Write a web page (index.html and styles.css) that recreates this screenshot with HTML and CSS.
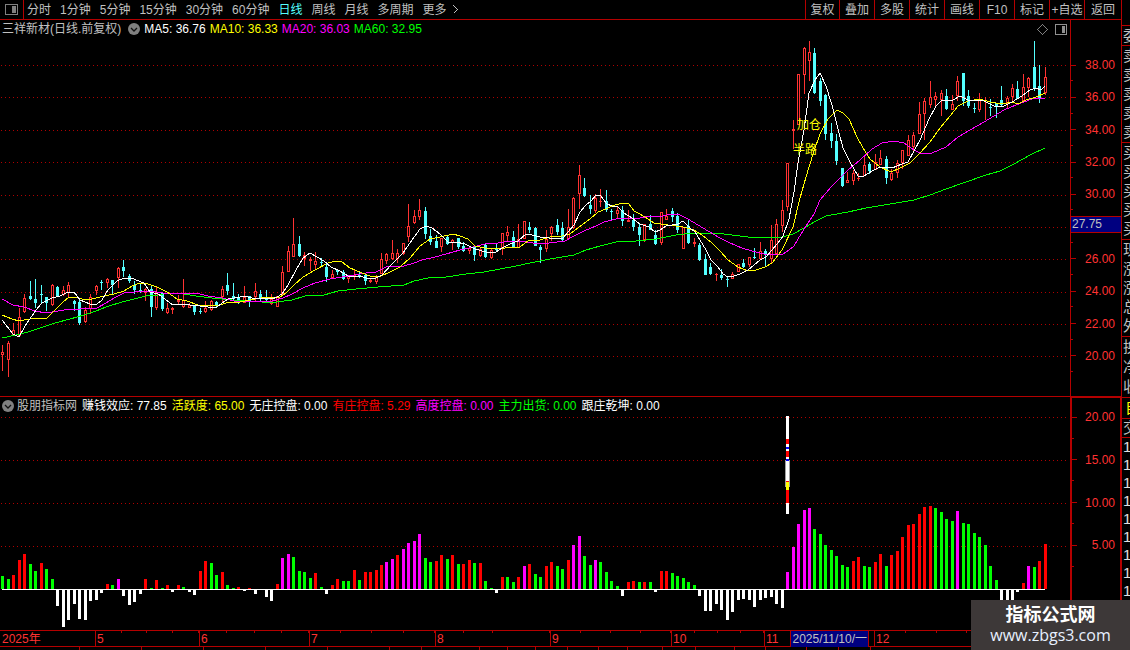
FILE: index.html
```
<!DOCTYPE html>
<html lang="zh-CN">
<head>
    <meta charset="UTF-8">
    <meta name="viewport" content="width=device-width, initial-scale=1.0">
    <title>三祥新材</title>
    <link rel="stylesheet" href="styles.css">
</head>
<body>
    <div class="app">
        <main class="main">
            <header class="toolbar">
                <button class="layout-btn" aria-label="布局">
                    <svg width="13" height="11" viewBox="0 0 13 11"><rect x="0.5" y="0.5" width="12" height="10" rx="1" fill="none" stroke="#808080"/><rect x="7" y="2" width="4" height="7" fill="#808080"/></svg>
                </button>
                <nav class="periods">
                    <button>分时</button>
                    <button>1分钟</button>
                    <button>5分钟</button>
                    <button>15分钟</button>
                    <button>30分钟</button>
                    <button>60分钟</button>
                    <button class="active">日线</button>
                    <button>周线</button>
                    <button>月线</button>
                    <button>多周期</button>
                    <button class="more">更多
                        <svg width="5" height="9" viewBox="0 0 5 9"><path d="M0.5 0.5L4.5 4.5L0.5 8.5" fill="none" stroke="#c0c0c0"/></svg>
                    </button>
                </nav>
                <div class="tools">
                    <button>复权</button>
                    <button>叠加</button>
                    <button>多股</button>
                    <button>统计</button>
                    <button>画线</button>
                    <button>F10</button>
                    <button>标记</button>
                    <button>+自选</button>
                    <button>返回</button>
                </div>
            </header>

            <section class="panel price-panel">
                <div class="plot">
                    <div class="legend">
                        <span class="name">三祥新材(日线.前复权)</span>
                        <button class="drop" aria-label="指标菜单"><svg width="12" height="12" viewBox="0 0 12 12"><circle cx="6" cy="6" r="6" fill="#808080"/><path d="M3 5L6 8L9 5" fill="none" stroke="#111" stroke-width="1.3"/></svg></button>
                        <span class="white">MA5: 36.76</span>
                        <span class="yellow">MA10: 36.33</span>
                        <span class="magenta">MA20: 36.03</span>
                        <span class="green">MA60: 32.95</span>
                        <span class="corner">
                            <svg width="11" height="11" viewBox="0 0 11 11"><path d="M5.5 0.5L10.5 5.5L5.5 10.5L0.5 5.5Z" fill="none" stroke="#808080"/></svg>
                            <svg width="12" height="11" viewBox="0 0 12 11"><rect x="0.5" y="0.5" width="11" height="10" rx="1" fill="none" stroke="#909090"/><rect x="7" y="2" width="3" height="7" fill="#909090"/></svg>
                        </span>
                    </div>
                    <svg class="chart" id="priceChart" viewBox="0 38 1070 358" preserveAspectRatio="none"></svg>
                </div>
                <div class="axis">
                    <ul class="ticks price-ticks">
                        <li>38.00</li>
                        <li>36.00</li>
                        <li>34.00</li>
                        <li>32.00</li>
                        <li>30.00</li>
                        <li></li>
                        <li>26.00</li>
                        <li>24.00</li>
                        <li>22.00</li>
                        <li>20.00</li>
                    </ul>
                    <span class="price-tag">27.75</span>
                </div>
            </section>

            <section class="panel volume-panel">
                <div class="plot">
                    <div class="legend">
                        <button class="drop" aria-label="指标菜单"><svg width="12" height="12" viewBox="0 0 12 12"><circle cx="6" cy="6" r="6" fill="#808080"/><path d="M3 5L6 8L9 5" fill="none" stroke="#111" stroke-width="1.3"/></svg></button>
                        <span class="name">股朋指标网</span>
                        <span class="white">赚钱效应: 77.85</span>
                        <span class="yellow">活跃度: 65.00</span>
                        <span class="white">无庄控盘: 0.00</span>
                        <span class="red">有庄控盘: 5.29</span>
                        <span class="magenta">高度控盘: 0.00</span>
                        <span class="green">主力出货: 0.00</span>
                        <span class="white">跟庄乾坤: 0.00</span>
                    </div>
                    <svg class="chart" id="barChart" viewBox="0 414 1070 216" preserveAspectRatio="none"></svg>
                </div>
                <div class="axis">
                    <ul class="ticks bar-ticks">
                        <li>20.00</li>
                        <li>15.00</li>
                        <li>10.00</li>
                        <li>5.00</li>
                    </ul>
                </div>
            </section>

            <footer class="timeline">
                <div class="months">
                    <span class="plain">2025年</span>
                    <span>5</span>
                    <span>6</span>
                    <span>7</span>
                    <span>8</span>
                    <span>9</span>
                    <span>10</span>
                    <span class="plain nov">11 <b class="date-tag">2025/11/10/一</b></span>
                    <span>12</span>
                    <span class="plain"></span>
                </div>
                <div class="tabs" id="tabs"></div>
            </footer>
        </main>

        <aside class="quote">
            <div class="gap"></div>
            <div class="group head"><span>委</span></div>
            <div class="group five"><span>卖</span><span>卖</span><span>卖</span><span>卖</span><span>卖</span></div>
            <div class="group five"><span>买</span><span>买</span><span>买</span><span>买</span><span>买</span></div>
            <div class="group five"><span>现</span><span>涨</span><span>涨</span><span>总</span><span>外</span></div>
            <div class="group three"><span>换</span><span>净</span><span>收</span></div>
            <div class="group head own"><span>自</span></div>
            <div class="group head"><span>交</span></div>
            <div class="group times"><span>1</span><span>1</span><span>1</span><span>1</span><span>1</span><span>1</span><span>1</span><span>1</span><span>1</span></div>
        </aside>
    </div>

    <div class="watermark">
        <strong>指标公式网</strong>
        <span>www.zbgs3.com</span>
    </div>

    <script>
        const NS = 'http://www.w3.org/2000/svg';
        const STEP = 5.487;

        // direction, high, body top, body bottom, low
        const candles = [
            ['r',345,352,355,371],['r',341,343,360,377],['r',323,330,335,336],['r',308,317,336,337],['r',294,298,312,313],
            ['c',281,296,299,300],['c',279,299,303,308],['c',285,294,295,303],['c',297,297,303,311],['r',284,285,305,306],
            ['c',286,287,296,297],['r',286,290,295,296],['r',282,285,293,298],['c',300,301,304,311],['c',300,302,323,325],
            ['r',307,310,322,323],['r',294,297,309,314],['r',285,286,291,295],['c',280,282,283,290],['r',278,279,283,288],
            ['c',280,280,285,294],['r',267,268,278,288],['c',260,267,271,277],['c',274,276,281,283],['c',281,285,290,294],
            ['c',283,290,292,293],['r',288,289,293,301],['c',285,289,307,317],['r',287,292,308,310],['c',292,293,309,311],
            ['r',303,308,313,314],['r',307,308,310,314],['r',295,300,302,304],['r',279,300,307,308],['r',303,305,308,308],
            ['c',305,306,312,315],['c',308,311,312,314],['r',301,308,312,313],['r',300,301,310,311],['c',301,302,306,307],
            ['r',286,289,297,302],['c',273,285,291,295],['c',283,296,299,301],['c',294,297,300,304],['r',286,297,303,303],
            ['c',296,296,302,307],['r',283,291,297,301],['c',290,294,298,302],['c',290,297,300,302],['r',294,299,304,305],
            ['r',296,296,307,307],['r',266,272,295,296],['r',246,251,272,272],['r',218,244,257,257],['c',236,244,256,257],
            ['r',252,255,259,266],['r',257,259,261,271],['r',252,261,265,269],['c',258,262,263,267],['c',263,267,277,282],
            ['r',270,274,278,278],['c',269,270,272,275],['c',270,272,279,280],['r',276,276,279,283],['r',270,275,277,280],
            ['c',271,275,277,278],['c',274,275,281,285],['r',278,280,282,283],['r',275,276,282,284],['r',253,259,274,274],
            ['r',253,254,261,264],['r',240,253,259,260],['r',249,253,259,263],['r',243,243,254,255],['r',204,226,237,242],
            ['r',210,216,223,224],['r',199,210,217,220],['c',207,211,234,239],['c',229,236,242,245],['c',235,241,248,248],
            ['r',238,238,247,252],['c',236,237,244,245],['r',239,240,243,250],['c',238,238,247,249],['c',242,246,251,252],
            ['r',246,248,251,254],['c',246,247,255,261],['r',248,249,256,257],['c',244,245,257,258],['r',249,250,258,259],
            ['c',244,249,250,252],['r',233,233,248,255],['r',226,232,236,241],['c',231,237,247,247],['r',224,239,248,248],
            ['r',221,221,239,239],['c',222,227,230,233],['c',227,228,246,246],['c',245,247,250,263],['r',230,239,249,252],
            ['r',226,227,234,241],['c',219,225,232,235],['c',222,228,240,242],['r',209,227,239,239],['r',197,198,228,229],
            ['r',165,175,194,209],['c',178,188,196,197],['c',195,205,209,214],['r',194,198,211,213],['r',189,201,202,207],
            ['c',190,201,210,212],['c',209,211,212,221],['r',206,210,214,218],['c',206,210,221,226],['r',210,220,222,222],
            ['c',214,220,227,231],['c',223,227,235,246],['r',224,224,240,242],['c',215,224,230,230],['c',230,235,244,245],
            ['r',212,212,243,245],['r',209,216,220,220],['c',208,211,217,222],['c',213,216,230,233],['r',227,227,249,249],
            ['c',220,226,243,244],['r',238,242,244,247],['c',243,245,260,261],['c',254,259,275,275],['c',263,267,274,275],
            ['r',273,274,275,281],['c',269,275,278,280],['c',276,279,280,287],['r',272,274,279,279],['r',264,264,272,272],
            ['c',259,263,267,268],['r',257,257,265,267],['c',248,257,258,259],['r',242,251,259,259],['c',249,251,255,266],
            ['r',225,240,259,263],['r',219,224,254,254],['r',200,210,226,232],['r',163,163,207,211],['r',120,129,131,149],
            ['r',74,74,125,125],['r',47,48,75,94],['r',41,52,61,81],['c',48,53,93,94],['c',78,81,101,106],
            ['c',94,95,134,140],['c',123,133,141,148],['c',134,141,161,165],['c',168,168,186,187],['r',172,180,183,183],
            ['r',170,173,181,185],['r',173,178,179,181],['r',156,165,176,176],['c',162,164,171,174],['r',154,162,170,170],
            ['r',150,158,165,165],['c',156,159,178,184],['r',169,173,180,181],['r',160,163,173,178],['r',150,150,163,169],
            ['r',135,140,156,156],['r',132,135,147,153],['r',102,114,134,134],['r',98,101,114,140],['r',81,97,105,108],
            ['r',92,96,100,108],['r',90,93,100,116],['c',89,96,109,110],['r',95,104,110,110],['r',76,81,96,101],
            ['c',73,73,101,106],['c',90,96,106,108],['c',103,108,109,113],['r',93,100,110,112],['r',97,100,101,120],
            ['c',99,107,108,116],['c',103,103,107,118],['c',86,100,105,107],['r',96,98,104,108],['r',84,88,97,101],
            ['c',81,89,99,99],['r',74,87,101,102],['r',77,78,88,97],['c',41,67,89,91],['c',65,86,99,103],['r',67,77,93,95]
        ];

        const averages = {
            green: '2,338 16,335 28,332 40,328 55,323 70,319 84,315 96,311 106,307 122,302 134,299 146,296 158,295 168,293 184,294 196,296 212,298 232,300 246,301 262,302 277,302 292,300 305,296 324,295 338,291 356,289 378,287 404,285 414,281 428,278 446,277 466,274 484,272 500,269 516,266 530,263 550,259 574,255 586,250 600,246 616,242 636,241 656,239 676,235 692,233 716,233 732,235 748,237 783,237 793,234 804,228 816,221 826,216 848,212 866,208 890,204 914,200 930,195 946,189 966,182 986,175 1000,171 1014,164 1030,155 1045,148',
            magenta: '2,299 13,305 24,307 35,311 46,313 58,311 70,309 80,309 97,308 106,303 116,297 124,293 135,292 150,291 163,293 178,294 196,293 208,296 222,298 234,301 258,302 272,301 283,298 292,294 303,288 315,283 330,279 348,276 366,273 376,272 386,267 404,266 414,263 422,260 435,257 446,254 460,250 473,247 485,244 498,243 510,241 522,241 533,243 549,243 565,241 574,236 584,231 596,226 604,222 616,219 630,218 640,218 650,216 660,217 670,214 680,215 688,219 698,225 708,231 720,238 730,243 742,248 752,251 764,254 783,254 789,250 794,246 798,239 806,226 814,214 820,200 832,186 848,170 860,160 872,149 882,143 894,141 904,143 914,150 920,153 932,153 946,147 958,137 970,130 984,122 994,116 1004,110 1016,105 1024,102 1032,99 1045,98',
            yellow: '2,315 12,319 19,321 30,319 40,318 47,318 55,310 62,303 69,297 75,297 82,299 92,299 104,296 114,294 124,291 132,286 140,283 145,283 157,287 167,292 177,299 187,301 198,305 216,306 226,303 240,302 250,300 266,297 280,297 286,293 294,285 303,277 315,270 328,263 336,261 342,262 350,268 362,273 370,276 378,277 388,273 400,267 410,258 420,246 430,239 440,237 453,234 460,236 468,239 475,246 485,248 500,249 510,247 520,247 528,241 540,240 550,237 562,236 570,234 578,228 590,219 598,212 606,209 612,206 622,203 629,204 634,211 640,214 648,219 654,223 668,225 683,227 694,230 702,235 712,243 720,251 728,260 738,267 748,271 756,270 765,267 772,263 782,250 793,227 800,198 806,177 814,151 820,134 828,119 837,110 843,113 849,119 857,137 863,148 870,159 880,167 891,172 900,168 910,163 920,153 930,142 940,128 950,116 958,106 968,101 980,99 990,102 1002,104 1012,102 1018,104 1026,100 1036,97 1045,93',
            white: '2,320 13,334 19,337 25,326 36,310 42,303 52,298 60,296 68,292 74,292 80,300 90,304 97,304 102,300 108,290 117,281 124,278 131,278 144,283 150,292 158,294 166,300 173,305 183,304 190,305 200,306 208,307 217,307 222,303 228,299 240,297 244,296 252,298 262,298 272,299 277,297 282,294 288,285 296,270 303,258 310,253 317,257 324,261 331,267 340,271 348,276 360,276 366,278 376,278 382,275 392,264 403,253 412,240 420,229 426,226 432,228 440,234 448,242 456,242 465,244 475,249 486,252 496,252 502,248 510,244 518,241 526,234 532,235 540,237 549,238 563,238 568,232 574,225 580,212 586,205 591,201 596,195 601,196 607,204 612,206 618,207 624,213 632,218 640,224 649,227 655,232 660,230 666,226 678,224 683,221 690,228 695,232 700,240 706,250 711,260 718,267 723,274 728,277 734,276 740,274 748,270 754,265 760,260 766,257 772,250 778,243 783,236 789,219 794,192 798,163 804,130 809,93 815,80 820,73 826,86 832,105 838,129 843,148 850,162 858,176 864,176 872,171 880,167 892,168 902,164 908,162 914,151 920,140 929,119 936,106 942,100 953,100 960,96 968,100 975,101 982,100 990,104 996,107 1004,106 1012,102 1022,96 1030,90 1036,88 1041,90 1045,86'
        };

        // colour letter + bar height, w hangs below the zero line
        const bars = ('g13 g10 r14 r29 r35 g25 g18 r26 g20 g10 w16 w37 w30 w14 w29 w30 w11 w10 w3 r5 g4 m10 w6 w15 w12 w4 ' +
            'r10 g1 r9 g1 r4 w2 r4 g2 w2 w5 r18 r28 g26 g14 r17 g4 g1 r2 w1 r1 w4 w0 w7 w11 r5 m31 m35 g32 g18 g17 g11 r16 ' +
            'g2 w4 r4 r10 g8 g8 r19 g9 r17 r17 r19 r24 m27 m30 r34 m40 m46 m48 m55 g31 g27 r28 r34 g30 r34 g25 r25 r29 g26 ' +
            'r26 g8 g1 w3 r12 g12 g7 r12 m23 r25 g15 g12 r23 r27 g23 g20 r29 m44 m53 g33 g24 m29 g27 g17 g8 g3 w6 r7 r8 g7 ' +
            'r7 g7 w2 r18 r18 g16 g13 g11 g7 g4 w6 w21 w21 w14 w20 w30 w22 w10 w9 w10 w17 w10 w8 w7 w14 w18 m17 m42 m65 ' +
            'm79 m81 g60 g55 g44 g39 g33 g24 g22 r28 r32 g23 g22 r27 r35 g23 r34 r38 r52 r64 r65 r75 r82 r83 g81 g77 g70 ' +
            'g68 m78 g66 g65 g56 g52 g44 g23 g9 w15 w13 w12 w2 r6 m23 g22 r28 r45').split(' ');

        const barColors = { g: '#00ff00', r: '#ff0000', m: '#ff00ff', w: '#ffffff' };

        // stacked signal on 2025/11/10: colour, top, bottom
        const signal = [
            ['#fff',416,439],['#f00',439,444],['#fff',444,447],['#00f',447,449],['#fff',449,451],['#f00',451,457],
            ['#fff',457,459],['#00f',459,461],['#fff',461,481],['#f00',481,482],['#ff0',482,490],['#f00',490,503],['#fff',503,514]
        ];

        function add(parent, tag, attrs) {
            const el = document.createElementNS(NS, tag);
            for (const key in attrs) el.setAttribute(key, attrs[key]);
            parent.appendChild(el);
            return el;
        }

        function rect(parent, x, y, w, h, fill) {
            return add(parent, 'rect', { x: x, y: y, width: w, height: h, fill: fill });
        }

        function center(i) {
            return Math.round(2.4 + STEP * i);
        }

        function gridLines(parent, rows) {
            rows.forEach(y => add(parent, 'path', { d: 'M1 ' + (y + 0.5) + 'H1068', class: 'grid-line' }));
        }

        function drawPrice() {
            const svg = document.getElementById('priceChart');
            gridLines(svg, [65, 97, 130, 162, 195, 227, 259, 292, 324, 356]);
            candles.forEach(([dir, high, top, bottom, low], i) => {
                const x = center(i);
                const color = dir === 'r' ? '#ff3232' : '#54ffff';
                rect(svg, x, high, 1, Math.max(low - high, 1), color);
                rect(svg, x - 1, top, 3, Math.max(bottom - top, 1), color);
                if (dir === 'r' && bottom - top > 2) {
                    rect(svg, x, top + 1, 1, bottom - top - 2, '#000');
                }
            });
            for (const name in averages) {
                add(svg, 'polyline', { points: averages[name], class: 'line ' + name });
            }
            add(svg, 'text', { x: 797, y: 129, class: 'mark' }).textContent = '加仓';
            add(svg, 'text', { x: 793, y: 154, class: 'mark' }).textContent = '半路';
        }

        function drawBars() {
            const svg = document.getElementById('barChart');
            gridLines(svg, [417, 460, 503, 546]);
            bars.forEach((bar, i) => {
                const h = Number(bar.slice(1));
                rect(svg, center(i) - 1, bar[0] === 'w' ? 590 : 589 - h, 3, h, barColors[bar[0]]);
            });
            rect(svg, 2, 589, 1043, 1, '#fff');
            rect(svg, 785, 460, 5, 27, '#a0a0a0');
            signal.forEach(([color, top, bottom]) => rect(svg, 786, top, 3, bottom - top, color));
        }

        function drawTabs() {
            const widths = [80, 62, 62, 62, 62, 62, 32, 58, 28, 28, 32, 31, 29, 35, 33, 39, 31, 41, 32, 32, 250];
            const tabs = document.getElementById('tabs');
            tabs.style.gridTemplateColumns = widths.map(w => w + 'fr').join(' ');
            widths.forEach(() => tabs.appendChild(document.createElement('i')));
        }

        drawPrice();
        drawBars();
        drawTabs();
    </script>
</body>
</html>
```
FILE: styles.css
```
* {
    box-sizing: border-box;
}
body {
    margin: 0;
    background: #000;
    color: #c0c0c0;
    font: 12px/16px "Liberation Sans", "Noto Sans CJK SC", sans-serif;
    overflow: hidden;
}
button {
    border: 0;
    padding: 0;
    background: none;
    color: inherit;
    font: inherit;
    white-space: nowrap;
    cursor: pointer;
}
svg {
    display: block;
    shape-rendering: crispEdges;
}
.app {
    display: grid;
    grid-template-columns: 1fr 9px;
    height: 100vh;
}
.main {
    display: grid;
    grid-template-rows: 20px 376fr 234fr 20px;
    min-width: 0;
}

/* toolbar */
.toolbar {
    display: flex;
    border-bottom: 1px solid #b40000;
}
.layout-btn {
    width: 24px;
    padding-left: 5px;
    border-right: 1px solid #b40000;
}
.periods {
    display: flex;
    flex: 1;
    gap: 9px;
    padding-left: 3px;
}
.periods .active {
    color: #54ffff;
}
.more {
    display: flex;
    align-items: center;
    gap: 6px;
}
.tools {
    display: flex;
}
.tools button {
    width: 35px;
    border-left: 1px solid #b40000;
}
.tools button:first-child {
    width: 34px;
}
.tools button:last-child {
    width: 37px;
}

/* panels */
.panel {
    display: grid;
    grid-template-columns: 1fr 51px;
    min-height: 0;
}
.plot {
    display: flex;
    flex-direction: column;
    min-width: 0;
    min-height: 0;
}
.legend {
    display: flex;
    align-items: center;
    gap: 4px;
    height: 18px;
    padding-left: 2px;
    white-space: nowrap;
}
.price-panel .name {
    margin-right: 3px;
}
.volume-panel .legend {
    height: 17px;
    gap: 5px;
}
.volume-panel .drop {
    margin-right: -2px;
}
.drop svg {
    shape-rendering: auto;
}
.corner {
    display: flex;
    align-items: center;
    gap: 7px;
    margin-left: auto;
    padding-right: 3px;
}
.chart {
    flex: 1;
    width: 100%;
    min-height: 0;
}
.volume-panel .plot {
    border-top: 1px solid #b40000;
}
.white { color: #fff; }
.yellow { color: #ff0; }
.magenta { color: #f0f; }
.green { color: #0f0; }
.red { color: #f00; }

.grid-line {
    fill: none;
    stroke: #b00000;
    stroke-dasharray: 1 3;
}
.line {
    fill: none;
    stroke: currentColor;
}
.mark {
    fill: #ff0;
    font-size: 12px;
}

/* value axis */
.axis {
    position: relative;
    border-left: 1px solid #b40000;
}
.ticks {
    display: grid;
    height: 100%;
    margin: 0;
    padding: 0;
    list-style: none;
    color: #ff3232;
}
.price-ticks {
    grid-template-rows: repeat(10, 323fr);
    padding: 29px 0 24px;
}
.bar-ticks {
    grid-template-rows: repeat(4, 43fr) 62fr;
    margin-top: -2px;
}
.ticks li {
    display: flex;
    align-items: center;
    justify-content: flex-end;
    padding-right: 6px;
    background:
        linear-gradient(#b40000, #b40000) left center / 5px 1px no-repeat,
        linear-gradient(#b40000, #b40000) left bottom / 2px 1px no-repeat;
}
.volume-panel .axis {
    border: 2px solid #b40000;
    border-right-width: 1px;
    border-bottom: 0;
}
.volume-panel .ticks li {
    padding-right: 5px;
}
.price-tag {
    position: absolute;
    top: 52%;
    left: 0;
    right: 0;
    padding-left: 1px;
    background: #000080;
    border: solid #b40000;
    border-width: 1px 0;
    line-height: 15px;
}

/* months */
.timeline {
    border-top: 1px solid #b40000;
    overflow: hidden;
}
.months {
    display: grid;
    grid-template-columns: 95fr 104fr 110fr 126fr 115fr 121fr 93fr 110fr 124fr 123fr;
    height: 16px;
    border-bottom: 1px solid #b40000;
    color: #ff3232;
    line-height: 16px;
}
.months span {
    padding-left: 1px;
    border-left: 1px solid #b40000;
    background: repeating-linear-gradient(to right, transparent 0 calc(25% - 1px), #b40000 calc(25% - 1px) 25%) top / 100% 2px no-repeat;
    white-space: nowrap;
}
.months .plain {
    background: none;
}
.months span:first-child {
    padding-left: 2px;
    border-left: 0;
}
.months .nov {
    display: flex;
}
.date-tag {
    width: 79px;
    margin-left: 12px;
    padding-left: 1px;
    border: solid #b40000;
    border-width: 0 1px;
    background: #000080;
    color: #c0c0c0;
    font-weight: normal;
}
.tabs {
    display: grid;
    height: 3px;
}
.tabs i {
    border-right: 1px solid #b40000;
}

/* quote column, cut off by the window edge */
.quote {
    display: grid;
    grid-template-rows: 25fr 20fr 97fr 97fr 97fr 61fr 21fr 19fr 163fr 50fr;
    border-left: 1px solid #b40000;
    overflow: hidden;
    font-size: 15px;
}
.group {
    display: grid;
    grid-auto-rows: 1fr;
    align-items: center;
    border-top: 1px solid #b40000;
    min-height: 0;
}
.group span {
    width: 16px;
    padding-left: 1px;
}
.own {
    color: #ff0;
}
.own span {
    padding-left: 3px;
}
.times {
    color: #e0e0e0;
}

/* site badge */
.watermark {
    position: fixed;
    right: 0;
    bottom: 0;
    display: flex;
    flex-direction: column;
    align-items: center;
    width: 159px;
    height: 50px;
    padding-top: 5px;
    background: #3d3838;
    color: #fff;
    line-height: 20px;
}
.watermark strong {
    font-size: 18px;
}
.watermark span {
    color: #e8f0ff;
    font-family: "Open Sans", sans-serif;
    font-size: 16px;
}
```
